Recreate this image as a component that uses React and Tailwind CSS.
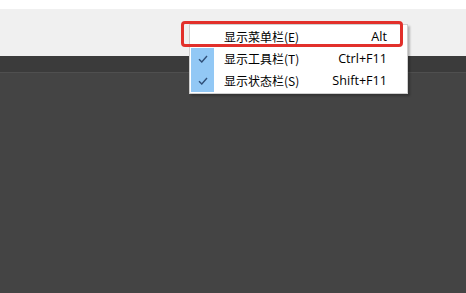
import React from "react";

const Check = () => (
  <svg width="10" height="8" viewBox="0 0 10 8" fill="none">
    <path d="M1 4.2 L3.8 7 L9 1" stroke="#2f4f78" strokeWidth="1.4" />
  </svg>
);

const items = [
  { label: "显示菜单栏(E)", key: "Alt", checked: false },
  { label: "显示工具栏(T)", key: "Ctrl+F11", checked: true },
  { label: "显示状态栏(S)", key: "Shift+F11", checked: true },
];

export default function App() {
  return (
    <div
      className="relative w-[466px] h-[293px] overflow-hidden flex flex-col"
      style={{ fontFamily: '"Noto Sans CJK SC", "Noto Sans", sans-serif' }}
    >
      <div className="h-[9px] bg-white" />
      <div className="h-[47px] bg-[#f0f0f0]" />
      <div className="h-[16px] bg-[#3b3b3b]" />
      <div className="h-[1px] bg-[#4f4f4f]" />
      <div className="flex-1 bg-[#444444]" />

      <div className="absolute left-[189px] top-[24px] w-[219px] bg-white border border-[#cfcfcf] shadow-[2px_2px_2px_rgba(0,0,0,0.25)] py-[1px] pl-[1px]">
        {items.map((it) => (
          <div key={it.label} className="flex items-center h-[22px] text-[12px] text-black">
            <div
              className={
                "w-[23px] h-full flex items-center justify-center " +
                (it.checked ? "bg-[#92c8f5]" : "")
              }
            >
              {it.checked ? <Check /> : null}
            </div>
            <div className="ml-[10px] flex-1">{it.label}</div>
            <div
              className="mr-[20px] text-[12.6px]"
              style={{ fontFamily: '"Open Sans", "Noto Sans CJK SC", sans-serif' }}
            >
              {it.key}
            </div>
          </div>
        ))}
      </div>

      <div className="absolute left-[181px] top-[21px] w-[222px] h-[26px] border-[3px] border-[#e2302b] rounded-[4px]" />
    </div>
  );
}
